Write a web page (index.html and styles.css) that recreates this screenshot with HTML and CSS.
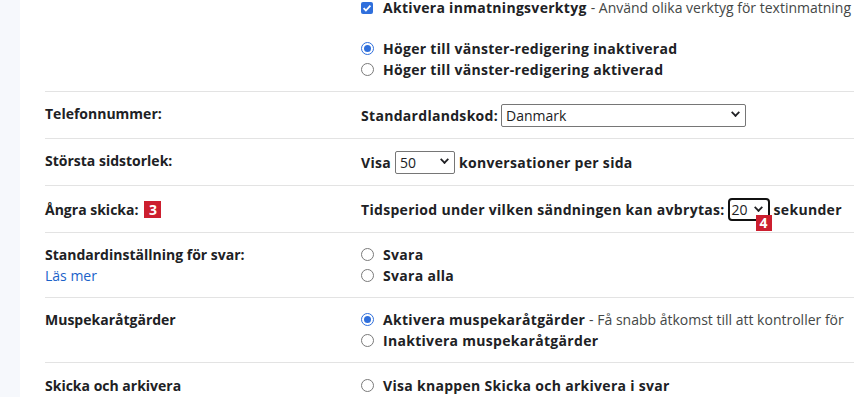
FILE: index.html
```html
<!DOCTYPE html>
<html lang="sv">
<head>
  <meta charset="UTF-8">
  <meta name="viewport" content="width=device-width, initial-scale=1.0">
  <title>Inställningar</title>
  <link rel="stylesheet" href="styles.css">
</head>
<body>

<div class="page">
  <!-- Vänster kant -->
  <div class="side"></div>

  <div class="panel">
    <div class="settings">

      <!-- Inmatningsverktyg / riktning -->
      <div class="row first">
        <div class="label"></div>
        <div class="value">
          <div class="option top">
            <span class="check">
              <svg width="12" height="12" viewBox="0 0 12 12"><path d="M2.6 6.2l2.3 2.3 4.5-4.8" fill="none" stroke="#fff" stroke-width="1.8"/></svg>
            </span>
            <span><b>Aktivera inmatningsverktyg</b> <span class="desc">- Använd olika verktyg för textinmatning</span></span>
          </div>
          <div class="group">
            <div class="option"><span class="radio on"></span><b>Höger till vänster-redigering inaktiverad</b></div>
            <div class="option"><span class="radio"></span><b>Höger till vänster-redigering aktiverad</b></div>
          </div>
        </div>
      </div>

      <!-- Telefonnummer -->
      <div class="row">
        <div class="label">Telefonnummer:</div>
        <div class="value inline">
          <b>Standardlandskod:</b>
          <div class="select wide">Danmark <span class="chev"></span></div>
        </div>
      </div>

      <!-- Sidstorlek -->
      <div class="row">
        <div class="label">Största sidstorlek:</div>
        <div class="value inline">
          <b>Visa</b>
          <div class="select small">50 <span class="chev"></span></div>
          <b>konversationer per sida</b>
        </div>
      </div>

      <!-- Ångra skicka -->
      <div class="row">
        <div class="label inline">Ångra skicka: <span class="badge">3</span></div>
        <div class="value inline">
          <b>Tidsperiod under vilken sändningen kan avbrytas:</b>
          <div class="select tiny focus">20 <span class="chev"></span><span class="badge over">4</span></div>
          <b>sekunder</b>
        </div>
      </div>

      <!-- Svar -->
      <div class="row">
        <div class="label">
          Standardinställning för svar:
          <a href="#" class="more">Läs mer</a>
        </div>
        <div class="value">
          <div class="option"><span class="radio"></span><b>Svara</b></div>
          <div class="option"><span class="radio"></span><b>Svara alla</b></div>
        </div>
      </div>

      <!-- Muspekare -->
      <div class="row">
        <div class="label">Muspekaråtgärder</div>
        <div class="value">
          <div class="option"><span class="radio on"></span><span><b>Aktivera muspekaråtgärder</b> <span class="desc">- Få snabb åtkomst till att kontroller för</span></span></div>
          <div class="option"><span class="radio"></span><b>Inaktivera muspekaråtgärder</b></div>
        </div>
      </div>

      <!-- Skicka och arkivera -->
      <div class="row last">
        <div class="label">Skicka och arkivera</div>
        <div class="value">
          <div class="option"><span class="radio"></span><b>Visa knappen Skicka och arkivera i svar</b></div>
        </div>
      </div>

    </div>
  </div>
</div>

</body>
</html>
```

FILE: styles.css
```css
/* Grund */
* {
  margin: 0;
  padding: 0;
  box-sizing: border-box;
}

html, body {
  height: 100%;
  overflow: hidden;
  font-family: 'Open Sans', 'Noto Sans', Arial, sans-serif;
  font-size: 14px;
  color: #202124;
  background-color: #ffffff;
}

b {
  font-weight: 700;
}

.page {
  display: flex;
  min-height: 100%;
}

.side {
  width: 20px;
  flex-shrink: 0;
  background-color: #f6f8fc;
}

.panel {
  flex: 1;
  padding-left: 25px;
  min-width: 0;
}

/* Rader */
.row {
  display: grid;
  grid-template-columns: 315px 1fr;
  border-top: 1px solid #e3e3e3;
  padding: 11px 0 11px;
  line-height: 21px;
  white-space: nowrap;
}

.row.first {
  border-top: none;
  padding-top: 0;
}

.row.last {
  padding-top: 12px;
  padding-bottom: 0;
}

.label {
  font-weight: 700;
  display: flex;
  flex-direction: column;
}

.label.inline {
  flex-direction: row;
  align-items: center;
  height: 24px;
}

.label .more {
  font-weight: normal;
  color: #1a62c9;
  text-decoration: none;
}

.value {
  padding-left: 1px;
  min-width: 0;
  letter-spacing: 0.3px;
}

.value.inline {
  display: flex;
  align-items: center;
  height: 24px;
}

.group {
  margin-top: 22px;
}

.option {
  display: flex;
  align-items: center;
  height: 21px;
}

.option.top {
  height: 16px;
  line-height: 16px;
}

.desc {
  font-weight: normal;
  letter-spacing: 0;
  color: #444746;
}

/* Kryssruta och radioknappar */
.check {
  width: 12px;
  height: 12px;
  border-radius: 2px;
  background-color: #2f6fdc;
  margin-right: 10px;
  display: flex;
  flex-shrink: 0;
}

.radio {
  width: 13px;
  height: 13px;
  border: 1px solid #7a7a7a;
  border-radius: 50%;
  margin-right: 9px;
  flex-shrink: 0;
  display: flex;
  align-items: center;
  justify-content: center;
}

.radio.on {
  border: 1.5px solid #2f6fdc;
}

.radio.on::after {
  content: "";
  width: 7px;
  height: 7px;
  border-radius: 50%;
  background-color: #2f6fdc;
}

/* Listrutor */
.select {
  position: relative;
  height: 23px;
  border: 1px solid #767676;
  border-radius: 2px;
  padding-left: 4px;
  margin: 0 4px 0 3px;
  display: flex;
  align-items: center;
  font-weight: normal;
  letter-spacing: 0;
  background: #fff;
}

.select.wide {
  width: 245px;
}

.select.small {
  width: 60px;
  margin-left: 4px;
}

.select.tiny {
  width: 42px;
  padding-left: 2px;
}

.select.focus {
  border: 2px solid #111;
  border-radius: 4px;
  height: 23px;
}

.chev {
  position: absolute;
  right: 6px;
  top: 4px;
  width: 7px;
  height: 7px;
  border-right: 2px solid #202124;
  border-bottom: 2px solid #202124;
  transform: rotate(45deg) scale(0.9);
}

/* Markeringar */
.badge {
  display: inline-flex;
  align-items: center;
  justify-content: center;
  width: 17px;
  height: 17px;
  background-color: #cc1f2f;
  color: #fff;
  font-weight: bold;
  font-size: 14px;
  letter-spacing: 0;
  margin-left: 6px;
}

.badge.over {
  position: absolute;
  left: 26px;
  top: 15px;
  width: 16px;
  height: 16px;
  margin: 0;
}
```
